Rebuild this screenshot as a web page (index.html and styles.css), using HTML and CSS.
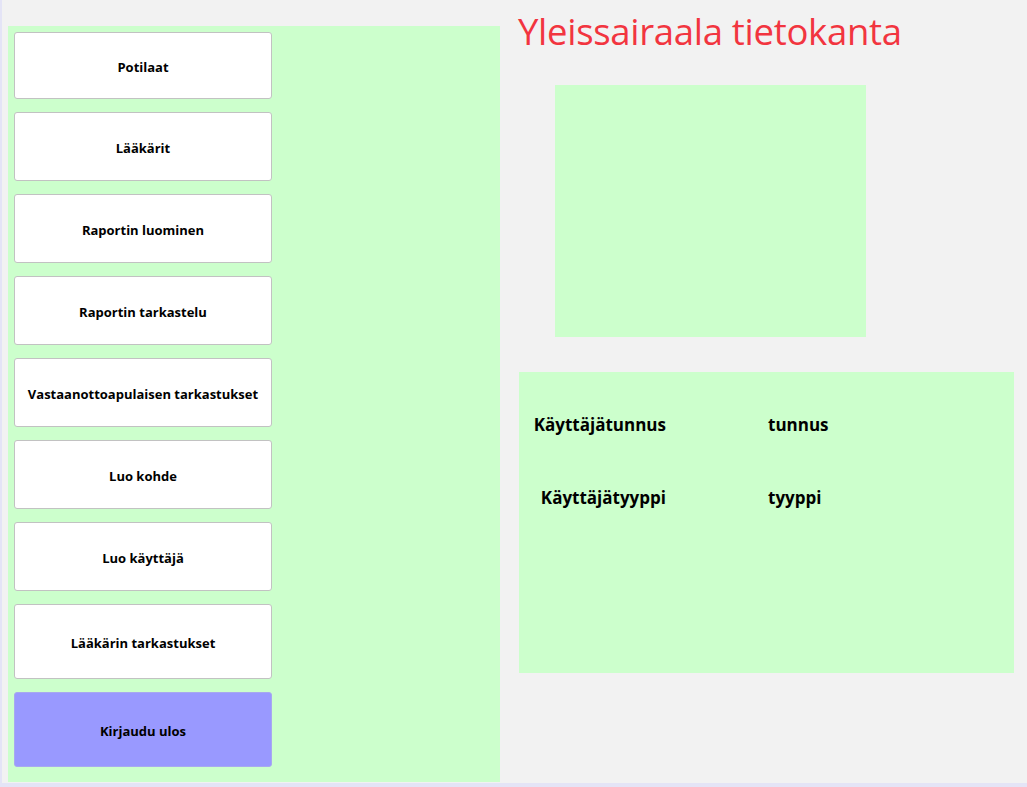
FILE: index.html
```html
<!DOCTYPE html>
<html lang="fi">
<head>
<meta charset="utf-8">
<title>Yleissairaala tietokanta</title>
<link rel="stylesheet" href="styles.css">
</head>
<body>
<div class="window">
  <div class="main">
    <nav class="menu">
      <button class="btn">Potilaat</button>
      <button class="btn h69">Lääkärit</button>
      <button class="btn h69">Raportin luominen</button>
      <button class="btn h69">Raportin tarkastelu</button>
      <button class="btn h69">Vastaanottoapulaisen tarkastukset</button>
      <button class="btn h69">Luo kohde</button>
      <button class="btn h69">Luo käyttäjä</button>
      <button class="btn h75">Lääkärin tarkastukset</button>
      <button class="btn h75 logout">Kirjaudu ulos</button>
    </nav>
    <section class="content">
      <h1 class="title">Yleissairaala tietokanta</h1>
      <div class="picture"></div>
      <div class="info">
        <div class="label">Käyttäjätunnus</div>
        <div class="value">tunnus</div>
        <div class="label">Käyttäjätyyppi</div>
        <div class="value">tyyppi</div>
      </div>
    </section>
  </div>
</div>
</body>
</html>
```
FILE: styles.css
```css
html, body {
  margin: 0;
  padding: 0;
}
body {
  width: 1027px;
  height: 787px;
  overflow: hidden;
  background: #f2f2f2;
  font-family: "Open Sans", "Noto Sans", sans-serif;
}
.window {
  box-sizing: border-box;
  width: 1027px;
  height: 787px;
  border-left: 2px solid #e4e4f6;
  border-bottom: 4px solid #e4e4f6;
}
.main {
  display: flex;
  align-items: flex-start;
}
.menu {
  margin-left: 6px;
  margin-top: 26px;
  width: 492px;
  height: 756px;
  box-sizing: border-box;
  background: #ccffcc;
  padding: 6px 0 0 6px;
  display: flex;
  flex-direction: column;
  gap: 13px;
}
.btn {
  width: 258px;
  height: 67px;
  background: #ffffff;
  border: 1px solid #c2c2c2;
  border-radius: 3px;
  font-family: "Open Sans", "Noto Sans", sans-serif;
  font-weight: 700;
  font-size: 13px;
  color: #000;
  padding: 2px 0 0 0;
  flex: none;
}
.btn.h69 { height: 69px; }
.btn.h75 { height: 75px; }
.btn.logout {
  background: #9999ff;
  border-color: #a8a8f0;
}
.content {
  margin-left: 19px;
  display: flex;
  flex-direction: column;
  align-items: flex-start;
}
.title {
  margin: 8px 0 0 -1px;
  font-family: "Open Sans", "Noto Sans", sans-serif;
  font-weight: 400;
  font-size: 36.5px;
  line-height: 46px;
  color: #f2353f;
  letter-spacing: -0.3px;
}
.picture {
  margin-top: 31px;
  margin-left: 36px;
  width: 311px;
  height: 252px;
  background: #ccffcc;
}
.info {
  margin-top: 35px;
  width: 495px;
  height: 301px;
  box-sizing: border-box;
  background: #ccffcc;
  display: grid;
  grid-template-columns: 147px 102px 1fr;
  grid-auto-rows: 73px;
  padding-top: 16px;
  align-content: start;
}
.label {
  grid-column: 1;
  text-align: right;
  font-weight: 700;
  font-size: 17px;
  line-height: 74px;
  white-space: nowrap;
}
.value {
  grid-column: 3;
  font-weight: 700;
  font-size: 17px;
  line-height: 74px;
}
```
